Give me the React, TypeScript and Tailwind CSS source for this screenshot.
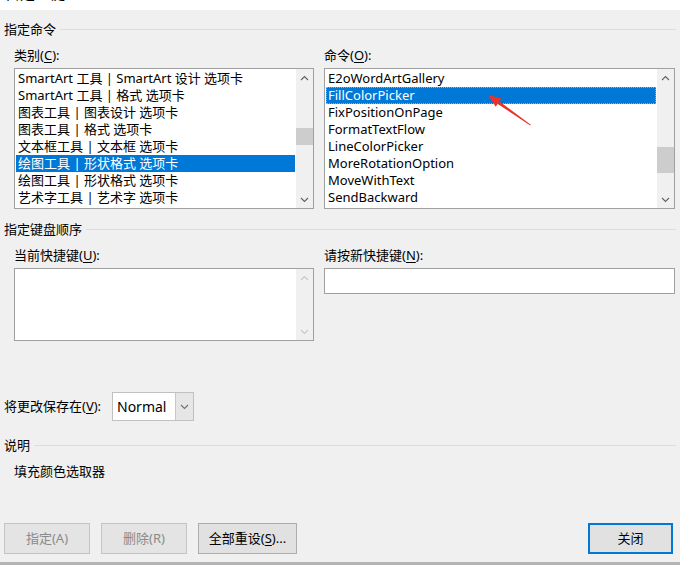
import React from "react";

const categories = [
  "SmartArt 工具 | SmartArt 设计 选项卡",
  "SmartArt 工具 | 格式 选项卡",
  "图表工具 | 图表设计 选项卡",
  "图表工具 | 格式 选项卡",
  "文本框工具 | 文本框 选项卡",
  "绘图工具 | 形状格式 选项卡",
  "绘图工具 | 形状格式 选项卡",
  "艺术字工具 | 艺术字 选项卡",
];

const commands = [
  "E2oWordArtGallery",
  "FillColorPicker",
  "FixPositionOnPage",
  "FormatTextFlow",
  "LineColorPicker",
  "MoreRotationOption",
  "MoveWithText",
  "SendBackward",
];

function Chevron({ up, color = "#606060" }: { up?: boolean; color?: string }) {
  return (
    <svg width="9" height="6" viewBox="0 0 9 6">
      <path
        d={up ? "M1 5 L4.5 1.5 L8 5" : "M1 1 L4.5 4.5 L8 1"}
        fill="none"
        stroke={color}
        strokeWidth="1.1"
      />
    </svg>
  );
}

function Scrollbar({ thumbTop, thumbH, disabled }: { thumbTop?: number; thumbH?: number; disabled?: boolean }) {
  const c = disabled ? "#c8c8c8" : "#606060";
  return (
    <div className="flex w-[17px] shrink-0 flex-col bg-[#f0f0f0]">
      <div className="flex h-[17px] items-center justify-center">
        <Chevron up color={c} />
      </div>
      <div className="relative flex-1">
        {thumbH ? (
          <div
            className="absolute left-0 right-0 bg-[#cdcdcd]"
            style={{ top: thumbTop, height: thumbH }}
          />
        ) : null}
      </div>
      <div className="flex h-[17px] items-center justify-center">
        <Chevron color={c} />
      </div>
    </div>
  );
}

function SectionHeader({ title }: { title: string }) {
  return (
    <div className="flex items-center gap-[4px] leading-[17px]">
      <span>{title}</span>
      <div className="h-px flex-1 bg-[#dcdcdc]" />
    </div>
  );
}

function U({ children }: { children: React.ReactNode }) {
  return <span className="underline underline-offset-2">{children}</span>;
}

export default function App() {
  return (
    <div
      className="relative flex h-[565px] w-[680px] flex-col overflow-hidden bg-[#f0f0f0] text-[13px] text-black"
      style={{ fontFamily: '"Noto Sans", "Noto Sans CJK SC", sans-serif' }}
    >
      {/* title bar, mostly scrolled off */}
      <div className="h-[10px] overflow-hidden bg-white px-[5px]">
        <div className="-mt-[15px] text-[15px] leading-[16px]">自定义键盘</div>
      </div>

      <div className="flex flex-col px-[4px]">
        <div className="mt-[11px]">
          <SectionHeader title="指定命令" />
        </div>

        <div className="mt-[9px] flex gap-[10px] pl-[10px]">
          <div className="flex w-[300px] flex-col">
            <div className="leading-[17px]">
              类别(<U>C</U>):
            </div>
            <div className="mt-[4px] flex h-[141px] border border-[#a0a0a0] bg-white">
              <div className="flex-1 p-[1px]">
                {categories.map((c, i) => (
                  <div
                    key={i}
                    className={
                      "h-[17px] whitespace-nowrap pl-[2px] leading-[17px] " +
                      (i === 5 ? "bg-[#0078d7] text-white" : "")
                    }
                  >
                    {c}
                  </div>
                ))}
              </div>
              <Scrollbar thumbTop={42} thumbH={17} />
            </div>
          </div>

          <div className="flex w-[351px] flex-col">
            <div className="leading-[17px]">
              命令(<U>O</U>):
            </div>
            <div className="mt-[4px] flex h-[141px] border border-[#a0a0a0] bg-white">
              <div className="flex-1 p-[1px]">
                {commands.map((c, i) => (
                  <div
                    key={i}
                    className={
                      "h-[17px] whitespace-nowrap pl-[2px] leading-[17px] " +
                      (i === 1
                        ? "bg-[#0078d7] text-white outline-1 -outline-offset-1 outline-dotted outline-[#e8a040]"
                        : "")
                    }
                  >
                    {c}
                  </div>
                ))}
              </div>
              <Scrollbar thumbTop={61} thumbH={26} />
            </div>
          </div>
        </div>

        <div className="mt-[12px]">
          <SectionHeader title="指定键盘顺序" />
        </div>

        <div className="mt-[9px] flex gap-[10px] pl-[10px]">
          <div className="flex w-[300px] flex-col">
            <div className="leading-[17px]">
              当前快捷键(<U>U</U>):
            </div>
            <div className="mt-[4px] flex h-[73px] border border-[#a0a0a0] bg-white">
              <div className="flex-1" />
              <Scrollbar disabled />
            </div>
          </div>
          <div className="flex w-[351px] flex-col">
            <div className="leading-[17px]">
              请按新快捷键(<U>N</U>):
            </div>
            <div className="mt-[4px] h-[26px] border border-[#a0a0a0] bg-white" />
          </div>
        </div>

        <div className="mt-[51px] flex items-center">
          <div className="w-[108px] leading-[17px]">
            将更改保存在(<U>V</U>):
          </div>
          <div className="flex h-[29px] w-[82px] border border-[#c0c0c0] bg-white">
            <div className="flex flex-1 items-center pl-[4px] text-[14px]">Normal</div>
            <div className="flex w-[18px] items-center justify-center border-l border-[#c8c8c8] bg-[#e6e6e6]">
              <Chevron color="#707070" />
            </div>
          </div>
        </div>

        <div className="mt-[16px]">
          <SectionHeader title="说明" />
        </div>
        <div className="mt-[9px] pl-[10px] leading-[17px]">填充颜色选取器</div>

        <div className="mt-[43px] flex gap-[11px] pr-[3px]">
          <button className="h-[31px] w-[86px] border border-[#c4c4c4] bg-[#e4e4e4] text-[#8a8a8a]">
            指定(A)
          </button>
          <button className="h-[31px] w-[86px] border border-[#c4c4c4] bg-[#e4e4e4] text-[#8a8a8a]">
            删除(R)
          </button>
          <button className="h-[31px] w-[99px] border border-[#adadad] bg-[#e1e1e1]">
            全部重设(<U>S</U>)...
          </button>
          <button className="ml-auto h-[31px] w-[85px] border-2 border-[#0078d7] bg-[#e1e1e1]">
            关闭
          </button>
        </div>
      </div>

      <div className="mt-auto h-[3px] bg-[#b4b4b4]" />

      {/* red annotation arrow */}
      <svg
        className="pointer-events-none absolute left-0 top-0"
        width="680"
        height="565"
        viewBox="0 0 680 565"
      >
        <polygon points="488,95 501.5,98.5 495.7,106.7" fill="#e8322b" />
        <polygon points="499.5,101.5 497.8,104 530.3,125.6 530.8,124.8" fill="#e8322b" />
      </svg>
    </div>
  );
}
